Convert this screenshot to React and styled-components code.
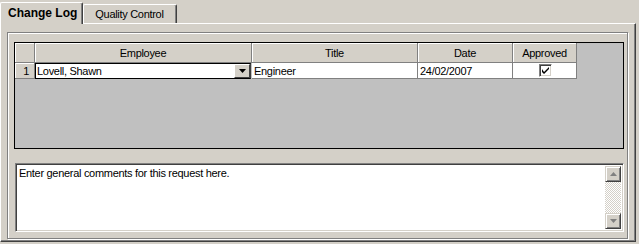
import styled, { createGlobalStyle } from "styled-components";

const Global = createGlobalStyle`
  body {
    margin: 0;
    background: #d4d0c8;
    font-family: "Liberation Sans", Arial, sans-serif;
    font-size: 11px;
    letter-spacing: -0.3px;
    color: #000;
  }
`;

const Window = styled.div`
  width: 639px;
  height: 244px;
  background: #d4d0c8;
  padding-top: 2px;
  box-sizing: border-box;
  overflow: hidden;
`;

const TabStrip = styled.div`
  display: flex;
  align-items: flex-end;
  height: 21px;
  position: relative;
  z-index: 1;
`;

const Tab = styled.div`
  box-sizing: border-box;
  height: ${(p) => (p.$active ? "22px" : "19px")};
  margin-bottom: ${(p) => (p.$active ? "-1px" : "0")};
  padding: ${(p) => (p.$active ? "3px 5px 0 7px" : "3px 12px 0 11px")};
  border-top: 1px solid #fff;
  border-left: 1px solid #fff;
  border-right: 1px solid #404040;
  box-shadow: inset -1px 0 0 #808080;
  border-radius: 2px 2px 0 0;
  background: #d4d0c8;
  font-size: ${(p) => (p.$active ? "12px" : "11px")};
  letter-spacing: ${(p) => (p.$active ? "0" : "-0.3px")};
  font-weight: ${(p) => (p.$active ? 700 : 400)};
  white-space: nowrap;
`;

const Panel = styled.div`
  box-sizing: border-box;
  width: 636px;
  height: 219px;
  border-top: 1px solid #fff;
  border-left: 1px solid #fff;
  border-right: 1px solid #404040;
  border-bottom: 1px solid #404040;
  box-shadow: inset -1px -1px 0 #808080;
  padding: 8px 7px 0 6px;
`;

const Frame = styled.div`
  box-sizing: border-box;
  height: 207px;
  border: 1px solid #808080;
  box-shadow: inset 1px 1px 0 #fff, 1px 1px 0 #fff;
  padding: 9px 3px 6px 6px;
  display: flex;
  flex-direction: column;
  gap: 14px;
`;

const Grid = styled.div`
  box-sizing: border-box;
  height: 108px;
  border: 1px solid #000;
  background: #c0c0c0;
`;

const Row = styled.div`
  display: grid;
  grid-template-columns: 20px 217px 166px 95px 64px;
  height: ${(p) => (p.$header ? "20px" : "16px")};
`;

const HeadCell = styled.div`
  box-sizing: border-box;
  background: #d4d0c8;
  border-right: 1px solid #808080;
  border-bottom: 1px solid #808080;
  box-shadow: inset 1px 1px 0 #fff;
  display: flex;
  align-items: center;
  justify-content: ${(p) => p.$align || "center"};
  padding-right: ${(p) => (p.$align ? "5px" : "0")};
  padding-top: 1px;
`;

const Cell = styled.div`
  box-sizing: border-box;
  background: #fff;
  border-right: 1px solid #808080;
  border-bottom: 1px solid #808080;
  display: flex;
  align-items: center;
  justify-content: ${(p) => p.$align || "flex-start"};
  padding-left: 2px;
  white-space: nowrap;
`;

const Combo = styled.div`
  box-sizing: border-box;
  background: #fff;
  border: 1px solid #000;
  border-right-color: #404040;
  display: flex;
  align-items: center;
  padding-left: 1px;
  margin-right: 1px;
`;

const ComboText = styled.span`
  flex: 1;
`;

const DropButton = styled.div`
  box-sizing: border-box;
  width: 16px;
  height: 100%;
  background: #d4d0c8;
  border-top: 1px solid #fff;
  border-left: 1px solid #fff;
  border-right: 1px solid #404040;
  border-bottom: 1px solid #404040;
  display: flex;
  align-items: center;
  justify-content: center;
`;

const Check = styled.div`
  box-sizing: border-box;
  width: 13px;
  height: 13px;
  background: #fff;
  border-top: 1px solid #808080;
  border-left: 1px solid #808080;
  border-right: 1px solid #fff;
  border-bottom: 1px solid #fff;
  box-shadow: inset 1px 1px 0 #404040, inset -1px -1px 0 #d4d0c8;
  display: flex;
  align-items: center;
  justify-content: center;
`;

const Memo = styled.div`
  box-sizing: border-box;
  height: 69px;
  margin-left: 1px;
  background: #fff;
  border-top: 1px solid #808080;
  border-left: 1px solid #808080;
  border-right: 1px solid #fff;
  border-bottom: 1px solid #fff;
  box-shadow: inset 1px 1px 0 #404040, inset -1px -1px 0 #d4d0c8;
  display: flex;
  padding: 2px;
`;

const MemoText = styled.div`
  flex: 1;
  padding: 0 0 0 1px;
  line-height: 14px;
`;

const ScrollBar = styled.div`
  width: 16px;
  display: flex;
  flex-direction: column;
`;

const Track = styled.div`
  flex: 1;
  background-color: #fff;
  background-image: repeating-conic-gradient(#d4d0c8 0 25%, #fff 0 50%);
  background-size: 2px 2px;
`;

const ArrowButton = styled.div`
  box-sizing: border-box;
  width: 16px;
  height: 16px;
  background: #d4d0c8;
  border-top: 1px solid #d4d0c8;
  border-left: 1px solid #d4d0c8;
  border-right: 1px solid #404040;
  border-bottom: 1px solid #404040;
  box-shadow: inset 1px 1px 0 #fff, inset -1px -1px 0 #808080;
  display: flex;
  align-items: center;
  justify-content: center;
`;

const Arrow = ({ up, color = "#808080" }) => (
  <svg width="7" height="4" viewBox="0 0 7 4">
    <path d={up ? "M3.5 0 L7 4 L0 4 Z" : "M0 0 L7 0 L3.5 4 Z"} fill={color} />
  </svg>
);

const App = () => (
  <Window>
    <Global />
    <TabStrip>
      <Tab $active>Change Log</Tab>
      <Tab>Quality Control</Tab>
    </TabStrip>
    <Panel>
      <Frame>
        <Grid>
          <Row $header>
            <HeadCell />
            <HeadCell>Employee</HeadCell>
            <HeadCell>Title</HeadCell>
            <HeadCell>Date</HeadCell>
            <HeadCell>Approved</HeadCell>
          </Row>
          <Row>
            <HeadCell $align="flex-end">1</HeadCell>
            <Combo>
              <ComboText>Lovell, Shawn</ComboText>
              <DropButton>
                <Arrow color="#000" />
              </DropButton>
            </Combo>
            <Cell>Engineer</Cell>
            <Cell>24/02/2007</Cell>
            <Cell $align="center">
              <Check>
                <svg width="7" height="7" viewBox="0 0 7 7">
                  <path d="M0 2 L0 5 L2 7 L7 2 L7 0 L2 5 Z" fill="#000" />
                </svg>
              </Check>
            </Cell>
          </Row>
        </Grid>
        <Memo>
          <MemoText>Enter general comments for this request here.</MemoText>
          <ScrollBar>
            <ArrowButton>
              <Arrow up />
            </ArrowButton>
            <Track />
            <ArrowButton>
              <Arrow />
            </ArrowButton>
          </ScrollBar>
        </Memo>
      </Frame>
    </Panel>
  </Window>
);

export default App;
